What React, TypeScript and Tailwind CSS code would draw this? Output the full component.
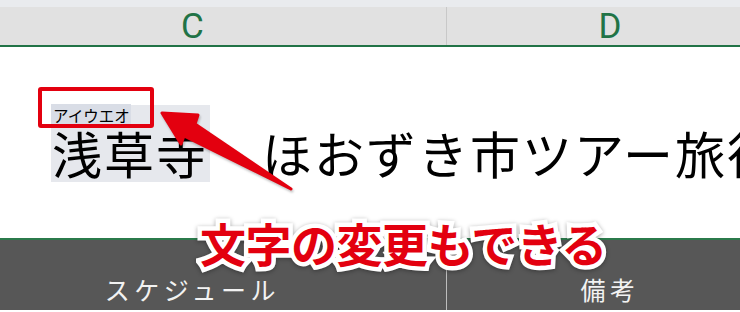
const jp = "font-['Noto_Sans_CJK_JP','Noto_Sans',sans-serif]";

function Arrow() {
  return (
    <svg
      className="absolute left-0 top-0 drop-shadow-[1px_2px_1px_rgba(0,0,0,0.25)]"
      width="740"
      height="312"
      viewBox="0 0 740 312"
    >
      <polygon
        points="162,113 198,115 195,124 291,189 184,136 181,144"
        fill="#e3000f"
        stroke="#e3000f"
        strokeWidth="3"
        strokeLinejoin="round"
      />
    </svg>
  );
}

function Callout() {
  const text = "文字の変更もできる";
  return (
    <div className={`absolute left-[200px] top-[213px] text-[46px] font-bold leading-[58px] tracking-[-0.5px] whitespace-nowrap ${jp}`}>
      <span className="text-white [-webkit-text-stroke:9px_white] drop-shadow-[0_1px_2px_rgba(0,0,0,0.35)]">{text}</span>
      <span className="absolute left-0 top-0 text-[#e3000f]">{text}</span>
    </div>
  );
}

export default function App() {
  return (
    <div className={`relative w-[740px] h-[312px] overflow-hidden bg-white ${jp}`}>
      <div className="h-[7px] bg-[#e9ebee]" />

      {/* column headers */}
      <div className="flex h-[40px] border-b-2 border-[#217346] bg-[#e1e1e1] font-['Roboto','Liberation_Sans',sans-serif] text-[35px] text-[#217346]">
        <div className="ml-[-61px] flex w-[508px] shrink-0 items-end justify-center border-r border-[#c8c8c8] leading-[36px]">
          C
        </div>
        <div className="flex w-[326px] shrink-0 items-end justify-center leading-[36px]">D</div>
      </div>

      {/* cell body */}
      <div className="flex h-[191px] items-start pl-[51px] pt-[58px] text-black">
        <div className="flex w-[159px] shrink-0 flex-col bg-[#e6e8ed]">
          <div className="h-[19px] pt-[2px] text-[15.5px] leading-[17px]">
            <span className="bg-[#d9dde6] pl-[2px] pr-[1px]">アイウエオ</span>
          </div>
          <div className="h-[58px] pl-[1px] text-[50px] leading-[56px] tracking-[2px] whitespace-nowrap">浅草寺</div>
        </div>
        <div className="mt-[19px] text-[50px] leading-[56px] tracking-[2px] whitespace-nowrap">
          {"\u3000ほおずき市ツアー旅行"}
        </div>
      </div>

      <div className="h-[2px] bg-[#2b7a4b]" />

      {/* header row of table */}
      <div className="flex h-[70px] bg-[#575757] text-[25px] tracking-[4.5px] text-[#f2f2f2]">
        <div className="ml-[-61px] flex w-[508px] shrink-0 items-center justify-center border-r border-[#bdbdbd] pt-[29px]">
          スケジュール
        </div>
        <div className="flex w-[326px] shrink-0 items-center justify-center pt-[29px]">備考</div>
      </div>

      {/* annotations */}
      <div className="absolute left-[38px] top-[87px] h-[41px] w-[116px] rounded-[3px] border-4 border-[#e3000f]" />
      <Arrow />
      <Callout />
    </div>
  );
}
